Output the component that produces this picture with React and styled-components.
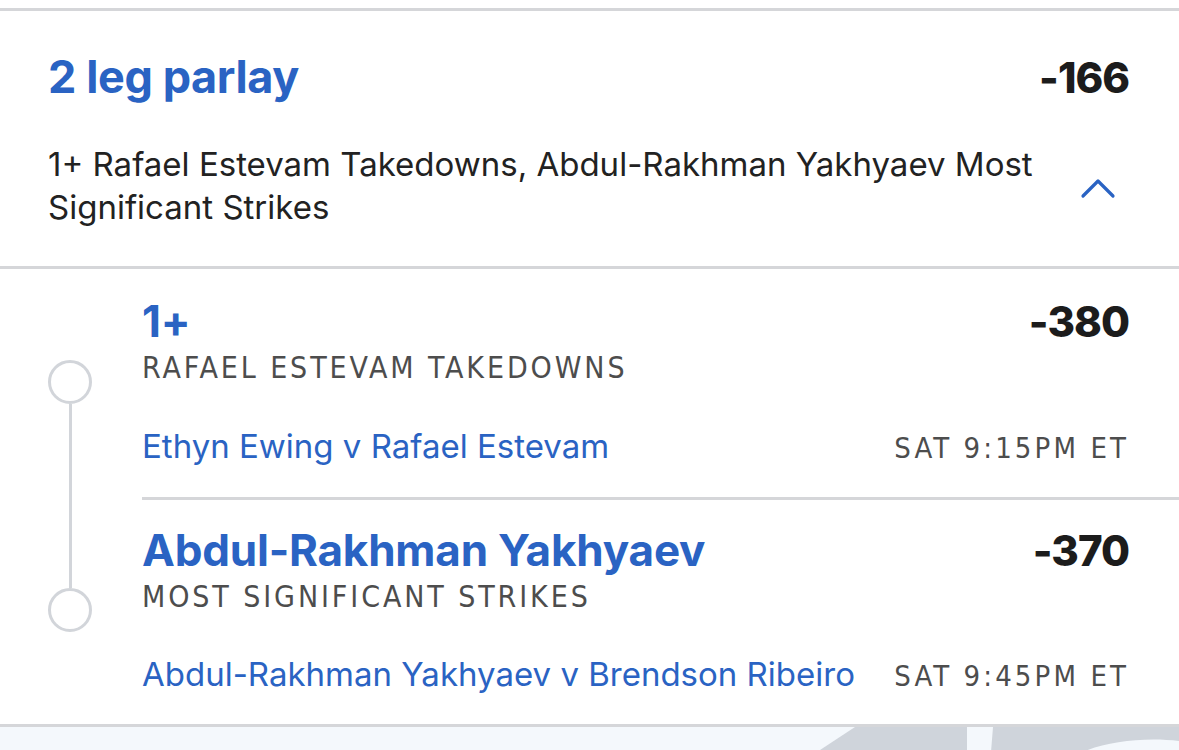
import React from "react";
import styled, { createGlobalStyle } from "styled-components";

const GlobalStyle = createGlobalStyle`
  html, body { margin: 0; padding: 0; background: #ffffff; }
  body { font-family: Inter, "Open Sans", Arial, sans-serif; color: #1c1c1c; }
  * { box-sizing: border-box; }
`;

const BLUE = "#2a63c3";
const LINE = "#d5d6d9";
const RAIL = "#d2d5da";

const Page = styled.div`
  width: 1179px;
  height: 750px;
  overflow: hidden;
  padding-top: 8px;
  display: flex;
  flex-direction: column;
`;

const Card = styled.section`
  border-top: 3px solid ${LINE};
  border-bottom: 3px solid ${LINE};
  background: #fff;
`;

const Header = styled.div`
  padding: 40px 50px 0 48px;
  border-bottom: 3px solid ${LINE};
  height: 258px;
`;

const TitleRow = styled.div`
  display: flex;
  justify-content: space-between;
  align-items: baseline;
`;

const Title = styled.h1`
  margin: 0;
  font-size: 45px;
  line-height: 52px;
  font-weight: 700;
  color: ${BLUE};
  letter-spacing: -0.4px;
`;

const Odds = styled.span`
  font-size: 42px;
  font-weight: 800;
  color: #1c1c1c;
  letter-spacing: -1px;
`;

const DescRow = styled.div`
  margin-top: 40px;
  display: flex;
  justify-content: space-between;
  align-items: center;
`;

const Desc = styled.p`
  margin: 0;
  width: 1000px;
  font-size: 33px;
  line-height: 43px;
  font-weight: 400;
  color: #222222;
  letter-spacing: 0;
`;

const Chevron = styled.svg`
  width: 36px;
  height: 22px;
  margin-right: 13px;
  margin-top: 4px;
  flex-shrink: 0;
`;

const Leg = styled.div`
  display: grid;
  grid-template-columns: 142px 1fr;
`;

const Rail = styled.div`
  display: flex;
  flex-direction: column;
  align-items: center;
  padding-right: 2px;
`;

const RailSpace = styled.div`
  height: ${(p) => p.$h || 0}px;
  flex: ${(p) => (p.$grow ? 1 : "none")};
`;

const RailLine = styled.div`
  width: 3px;
  background: ${RAIL};
  height: ${(p) => (p.$h ? `${p.$h}px` : "auto")};
  flex: ${(p) => (p.$grow ? 1 : "none")};
`;

const Dot = styled.div`
  width: 44px;
  height: 44px;
  border-radius: 50%;
  border: 3px solid ${RAIL};
  background: #fff;
  flex-shrink: 0;
`;

const LegBody = styled.div`
  padding: ${(p) => p.$pad};
  padding-right: 50px;
  border-top: ${(p) => (p.$divider ? `3px solid ${LINE}` : "none")};
  height: ${(p) => p.$h}px;
`;

const Row = styled.div`
  display: flex;
  justify-content: space-between;
  align-items: baseline;
`;

const Selection = styled.span`
  font-size: 44px;
  line-height: 46px;
  font-weight: 700;
  color: ${BLUE};
  letter-spacing: -0.2px;
`;

const Market = styled.div`
  margin-top: 4px;
  font-family: "DejaVu Sans Condensed", "DejaVu Sans", sans-serif;
  font-stretch: condensed;
  font-size: 30px;
  line-height: 34px;
  letter-spacing: 2.9px;
  color: #4d4d4d;
  text-transform: uppercase;
`;

const MatchRow = styled(Row)`
  margin-top: ${(p) => p.$mt}px;
`;

const Match = styled.span`
  font-size: 33px;
  line-height: 40px;
  color: ${BLUE};
  letter-spacing: 0;
`;

const Time = styled.span`
  font-family: "DejaVu Sans Condensed", "DejaVu Sans", sans-serif;
  font-stretch: condensed;
  font-size: 29px;
  letter-spacing: 3.1px;
  color: #4d4d4d;
  white-space: nowrap;
`;

const Footer = styled.div`
  flex: 1;
  background: #f4f8fc;
  display: flex;
  justify-content: flex-end;
`;

const Mark = styled.svg`
  width: 362px;
  height: 25px;
  display: block;
`;

export default function App() {
  return (
    <>
      <GlobalStyle />
      <Page>
        <Card>
          <Header>
            <TitleRow>
              <Title>2 leg parlay</Title>
              <Odds>-166</Odds>
            </TitleRow>
            <DescRow>
              <Desc>
                1+ Rafael Estevam Takedowns, Abdul-Rakhman Yakhyaev Most Significant Strikes
              </Desc>
              <Chevron viewBox="0 0 36 22" fill="none">
                <path d="M3 19 L18 4 L33 19" stroke={BLUE} strokeWidth="3.2" strokeLinecap="round" strokeLinejoin="round" />
              </Chevron>
            </DescRow>
          </Header>

          <Leg>
            <Rail>
              <RailSpace $h={91} />
              <Dot />
              <RailLine $grow />
            </Rail>
            <LegBody $pad="27px 0 0 0" $h={228}>
              <Row>
                <Selection>1+</Selection>
                <Odds>-380</Odds>
              </Row>
              <Market>Rafael Estevam Takedowns</Market>
              <MatchRow $mt={41}>
                <Match>Ethyn Ewing v Rafael Estevam</Match>
                <Time>SAT 9:15PM ET</Time>
              </MatchRow>
            </LegBody>
          </Leg>

          <Leg>
            <Rail>
              <RailLine $h={91} />
              <Dot />
              <RailSpace $grow />
            </Rail>
            <LegBody $divider $pad="25px 0 0 0" $h={227}>
              <Row>
                <Selection>Abdul-Rakhman Yakhyaev</Selection>
                <Odds>-370</Odds>
              </Row>
              <Market>Most Significant Strikes</Market>
              <MatchRow $mt={40}>
                <Match>Abdul-Rakhman Yakhyaev v Brendson Ribeiro</Match>
                <Time>SAT 9:45PM ET</Time>
              </MatchRow>
            </LegBody>
          </Leg>
        </Card>
        <Footer>
          <Mark viewBox="0 0 362 25" preserveAspectRatio="none">
            <path d="M38 0 L150 0 L150 25 L0 25 Z" fill="#cfd4db" />
            <path d="M176 0 L362 0 L362 14 C330 10 290 14 266 25 L174 25 Z" fill="#cfd4db" />
          </Mark>
        </Footer>
      </Page>
    </>
  );
}
